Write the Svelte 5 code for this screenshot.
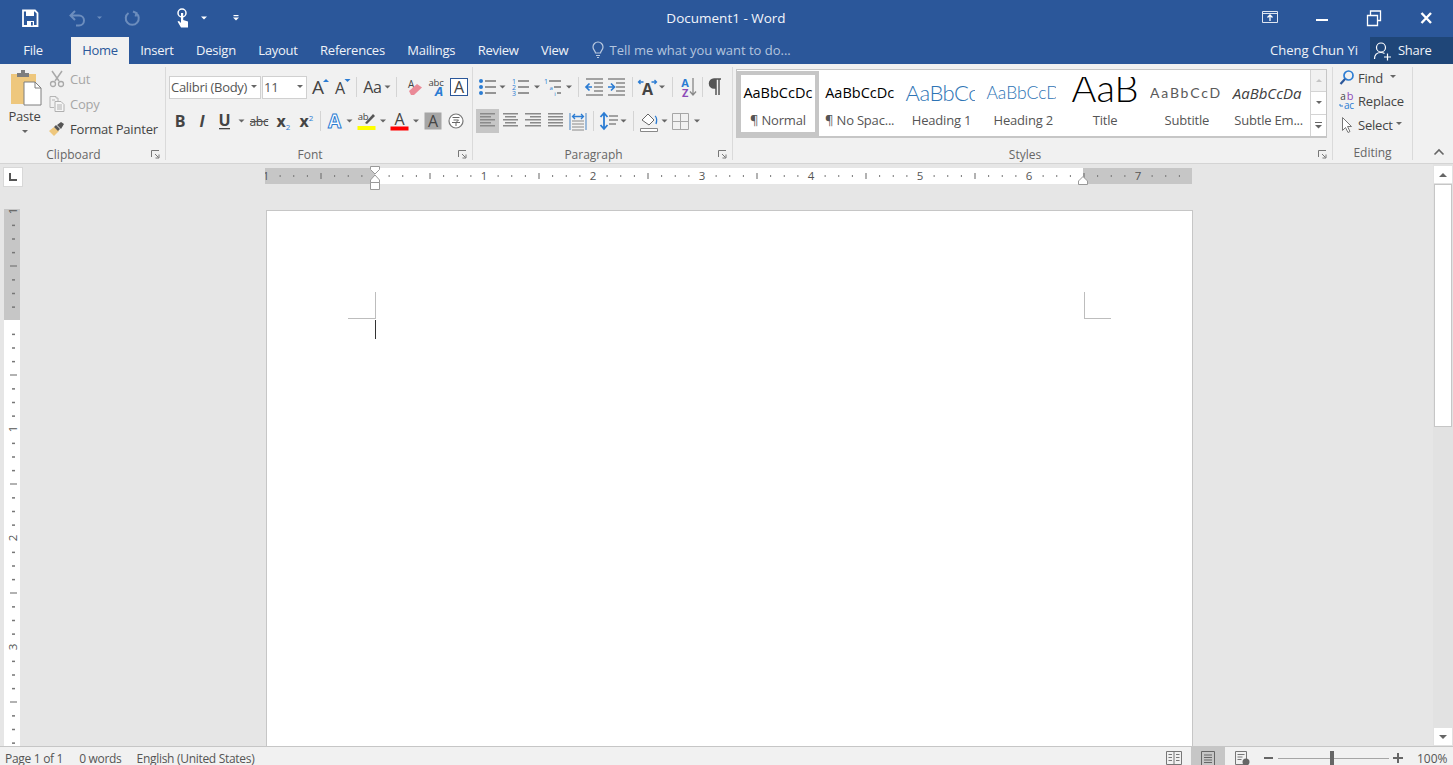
<script>
  const tabs = ["Insert", "Design", "Layout", "References", "Mailings", "Review", "View"];
  const styles = [
    { label: "¶ Normal", cls: "normal", sample: "AaBbCcDc" },
    { label: "¶ No Spac...", cls: "nospace", sample: "AaBbCcDc" },
    { label: "Heading 1", cls: "h1", sample: "AaBbCc" },
    { label: "Heading 2", cls: "h2", sample: "AaBbCcD" },
    { label: "Title", cls: "title", sample: "AaB" },
    { label: "Subtitle", cls: "subtitle", sample: "AaBbCcD" },
    { label: "Subtle Em...", cls: "subtle", sample: "AaBbCcDa" },
  ];

  // ruler scale: 109px per inch, one tick each eighth
  const step = 109 / 8;
  const hTicks = [];
  for (let k = -8; k <= 59; k++) hTicks.push({ k, x: 110 + k * step });
  const vTicks = [];
  for (let k = -8; k <= 31; k++) vTicks.push({ k, y: 111 + k * step });
</script>

{#snippet caret(w, fill = "#666")}
  <svg width={w} height="24" viewBox="0 0 {w} 24"><path d="M{w / 2 - 3} 10.5h6l-3 3z" fill={fill} /></svg>
{/snippet}

{#snippet sep(w)}
  <span class="sep" style="width:{w}px"><i></i></span>
{/snippet}

{#snippet lines(w, rows)}
  <svg width={w} height="24" viewBox="0 0 {w} 24">
    {#each rows as r, i}
      <rect x={r[0]} y={4 + i * 3} width={r[1]} height="1.5" fill="#8a8a8a" />
    {/each}
  </svg>
{/snippet}

{#snippet launcher()}
  <svg class="launch" width="9" height="9" viewBox="0 0 9 9"><path d="M.5 7V.5H8M4 4l3.5 3.5M8 4.5V8H4.5" fill="none" stroke="#777" /></svg>
{/snippet}

<div class="word">
  <header class="titlebar">
    <div class="qat">
      <svg class="save" width="24" height="24" viewBox="0 0 24 24"><path d="M5 4.500h12l2.500 2.500v13h-14.500z" fill="none" stroke="#fff" stroke-width="1.800" /><path d="M8 5h8v5h-8zM9 15h7v5h-7z" fill="#fff" /><rect x="13" y="16" width="1.800" height="3.500" fill="#2b579a" /></svg>
      <svg class="undo" width="24" height="24" viewBox="0 0 24 24"><path d="M9 5l-4.500 4.500 4.500 4.500M5 9.500h8a5 5 0 0 1 0 10h-3" fill="none" stroke="#6c8dbd" stroke-width="2" /></svg>
      <svg width="18" height="24" viewBox="0 0 18 24"><path d="M7 10.500h5l-2.500 2.500z" fill="#6c8dbd" /></svg>
      <svg class="redo" width="24" height="24" viewBox="0 0 24 24"><path d="M8.500 7a6.500 6.500 0 1 0 7.500 0M13 5.500l3.500 1.500-1 3.500" fill="none" stroke="#6c8dbd" stroke-width="2" /></svg>
      <svg class="touch" width="24" height="24" viewBox="0 0 24 24"><circle cx="11" cy="7" r="4" fill="none" stroke="#fff" stroke-width="1.500" /><path d="M10 7h2.200v7l4.800 1.500v6h-7l-3.500-6 1.500-.5 2 2z" fill="#fff" /></svg>
      <svg width="18" height="24" viewBox="0 0 18 24"><path d="M6 10.500h6l-3 3z" fill="#fff" /></svg>
      <svg class="custom" width="18" height="24" viewBox="0 0 18 24"><rect x="6.500" y="9" width="5" height="1.200" fill="#fff" /><path d="M6 11.500h6l-3 3z" fill="#fff" /></svg>
    </div>
    <div class="doc-title">Document1 - Word</div>
    <div class="winbtns">
      <svg class="disp" width="28" height="24" viewBox="0 0 28 24"><path d="M6.500 6.500h15v11h-15zM7 8.500h14" fill="none" stroke="#dfe6f1" /><path d="M14 16v-6M11.500 12.500l2.500-2.500 2.500 2.500" fill="none" stroke="#fff" stroke-width="1.300" /></svg>
      <svg width="52" height="24" viewBox="0 0 52 24"><rect x="20" y="14" width="12" height="2" fill="#fff" /></svg>
      <svg width="52" height="24" viewBox="0 0 52 24"><path d="M19.500 10.500h10v10h-10zM22.500 10v-4h10v9.500h-3" fill="none" stroke="#fff" stroke-width="1.300" /></svg>
      <svg width="53" height="24" viewBox="0 0 53 24"><path d="M21.500 8l9.500 10M31 8l-9.500 10" stroke="#fff" stroke-width="2.400" /></svg>
    </div>
  </header>

  <nav class="tabbar">
    <div class="tab file">File</div>
    <div class="tab active">Home</div>
    {#each tabs as t}
      <div class="tab">{t}</div>
    {/each}
    <div class="tellme">
      <svg width="14" height="18" viewBox="0 0 14 18"><path d="M4.500 12c0-2-2.500-3-2.500-6a5 5 0 0 1 10 0c0 3-2.500 4-2.500 6zM5 14.500h4M6 16.500h2" fill="none" stroke="#b9c9e0" stroke-width="1.200" /></svg>
      <span>Tell me what you want to do...</span>
    </div>
    <div class="user">Cheng Chun Yi</div>
    <div class="share">
      <svg width="20" height="20" viewBox="0 0 20 20"><circle cx="8" cy="6.500" r="4.500" fill="none" stroke="#fff" stroke-width="1.200" /><path d="M1.500 18c0-4 2.500-6.500 6.500-6.500 1.500 0 2.500.3 3.500 1M14.500 12.500v7M11 16h7" fill="none" stroke="#fff" stroke-width="1.200" /></svg>
      <span>Share</span>
    </div>
  </nav>

  <section class="ribbon">
    <div class="group clipboard">
      <div class="content clip-content">
        <div class="paste">
          <svg width="36" height="38" viewBox="0 0 36 38">
            <path d="M4 5h25v30h-25z" fill="#eec77d" />
            <path d="M10 4h4v-3h4v3h4v4h-12z" fill="#7e7e7e" />
            <path d="M17 13h11l6 6v17h-17z" fill="#fff" stroke="#7e7e7e" />
            <path d="M28 13v6h6" fill="none" stroke="#7e7e7e" />
          </svg>
          <span>Paste</span>
          <svg width="8" height="5" viewBox="0 0 8 5"><path d="M1 0h6l-3 3z" fill="#666" /></svg>
        </div>
        <div class="clip-list">
          <div class="clip-item dim">
            <svg width="18" height="18" viewBox="0 0 18 18"><path d="M4 1l7 10M14 1l-7 10" stroke="#a9a9a9" stroke-width="1.500" /><circle cx="5" cy="14" r="2.500" fill="none" stroke="#a9a9a9" stroke-width="1.300" /><circle cx="13" cy="14" r="2.500" fill="none" stroke="#a9a9a9" stroke-width="1.300" /></svg>
            <span>Cut</span>
          </div>
          <div class="clip-item dim">
            <svg width="18" height="18" viewBox="0 0 18 18"><path d="M2 1.500h6v1.500h2v3M2 1.500v11h4M4 5h3" fill="none" stroke="#b5b5b5" /><path d="M7 6.500h6l3 3v7h-9zM9 10h5M9 12h5M9 14h5" fill="#f6f6f6" stroke="#b0b0b0" /></svg>
            <span>Copy</span>
          </div>
          <div class="clip-item">
            <svg width="18" height="18" viewBox="0 0 18 18"><path d="M1 11l5-4 5 4-5 5z" fill="#eec77d" /><path d="M6 7l2-2 4 4-2 2zM9 5l4-3 3 2-3 5z" fill="#555" /></svg>
            <span>Format Painter</span>
          </div>
        </div>
      </div>
      <div class="glabel"><span></span><span>Clipboard</span>{@render launcher()}</div>
    </div>

    <div class="group font">
      <div class="content">
        <div class="row">
          <div class="combo name"><span>Calibri (Body)</span><svg width="8" height="5" viewBox="0 0 8 5"><path d="M1 0h6l-3 3z" fill="#666" /></svg></div>
          <div class="combo size"><span>11</span><svg width="8" height="5" viewBox="0 0 8 5"><path d="M1 0h6l-3 3z" fill="#666" /></svg></div>
          <svg width="22" height="24" viewBox="0 0 22 24"><text x="10" y="19" class="g" font-size="19">A</text><path d="M15 7l3-3 3 3z" fill="#2b7cd3" /></svg>
          <svg width="22" height="24" viewBox="0 0 22 24"><text x="10" y="19" class="g" font-size="16">A</text><path d="M14.500 4h6l-3 3z" fill="#2b7cd3" /></svg>
          {@render sep(9)}
          <svg width="23" height="24" viewBox="0 0 23 24"><text x="11.500" y="17.500" class="g" font-size="16">Aa</text></svg>
          {@render caret(7)}
          {@render sep(11)}
          <svg class="gap1" width="23" height="24" viewBox="0 0 23 24"><text x="8" y="13" class="g" font-size="10">A</text><path d="M6 16l8-7 5 3.500-8 7.500h-3z" fill="#ea8a97" /></svg>
          <svg width="21" height="24" viewBox="0 0 21 24"><text x="10" y="11" class="g" font-size="9.500">abc</text><text x="13" y="21" class="g blue" font-size="13" font-style="italic" font-weight="700">A</text></svg>
          <svg class="gap1" width="22" height="24" viewBox="0 0 22 24"><rect x="2.500" y="3.500" width="17" height="17" fill="#fff" stroke="#2b579a" /><text x="11" y="18" class="g" font-size="16">A</text></svg>
        </div>
        <div class="row second">
          <svg width="22" height="24" viewBox="0 0 22 24"><text x="11" y="18" class="g" font-size="16" font-weight="700">B</text></svg>
          <svg width="22" height="24" viewBox="0 0 22 24"><text x="11" y="18" class="g" font-size="16" font-style="italic" font-weight="700">I</text></svg>
          <svg width="23" height="24" viewBox="0 0 23 24"><text x="11.500" y="17" class="g" font-size="16" font-weight="700">U</text><rect x="6" y="19" width="11" height="1.300" fill="#444" /></svg>
          {@render caret(11)}
          <svg width="24" height="24" viewBox="0 0 24 24"><text x="12" y="16.500" class="g" font-size="12">abc</text><rect x="3" y="12" width="18" height="1" fill="#555" /></svg>
          <svg width="23" height="24" viewBox="0 0 23 24"><text x="10" y="18" class="g" font-size="16" font-weight="700">x</text><text x="17" y="21" class="g blue" font-size="8">2</text></svg>
          <svg width="22" height="24" viewBox="0 0 22 24"><text x="10" y="18" class="g" font-size="16" font-weight="700">x</text><text x="17" y="12" class="g blue" font-size="8">2</text></svg>
          {@render sep(8)}
          <svg width="21" height="24" viewBox="0 0 21 24"><text x="10.500" y="19" class="outline" font-size="19">A</text></svg>
          {@render caret(9)}
          <svg width="25" height="24" viewBox="0 0 25 24"><text x="9" y="11" class="g" font-size="9.500">ab</text><path d="M11 14l8-9 2 2-8 8z" fill="#555" /><rect x="3.500" y="17" width="18" height="4" fill="#ffff00" /></svg>
          {@render caret(8)}
          <svg width="25" height="24" viewBox="0 0 25 24"><text x="12.500" y="16" class="g" font-size="16">A</text><rect x="3.500" y="17.500" width="18" height="4" fill="#ff0000" /></svg>
          {@render caret(8)}
          <svg width="26" height="24" viewBox="0 0 26 24"><rect x="4.500" y="3.500" width="17" height="17" fill="#a6a6a6" /><text x="13" y="18" class="g" font-size="16">A</text></svg>
          <svg width="20" height="24" viewBox="0 0 20 24"><circle cx="10" cy="12" r="7" fill="#fff" stroke="#777" stroke-width="1.200" /><path d="M6.500 8.500h7M7.500 11h5l-2 2M6 13.500h8M10 13v4" fill="none" stroke="#666" /></svg>
        </div>
      </div>
      <div class="glabel"><span></span><span>Font</span>{@render launcher()}</div>
    </div>

    <div class="group para">
      <div class="content">
        <div class="row">
          <svg width="22" height="24" viewBox="0 0 22 24"><g fill="#2b7cd3"><circle cx="5" cy="6" r="2" /><circle cx="5" cy="12" r="2" /><circle cx="5" cy="18" r="2" /></g><path d="M9 6h11M9 12h11M9 18h11" stroke="#777" stroke-width="1.300" /></svg>
          {@render caret(9)}
          <svg width="26" height="24" viewBox="0 0 26 24"><text x="7" y="9" class="g blue" font-size="7">1</text><text x="7" y="15" class="g blue" font-size="7">2</text><text x="7" y="21" class="g blue" font-size="7">3</text><path d="M11 6h11M11 12h11M11 18h11" stroke="#777" stroke-width="1.300" /></svg>
          {@render caret(8)}
          <svg width="24" height="24" viewBox="0 0 24 24"><text x="5" y="9" class="g blue" font-size="7">1</text><text x="10" y="15" class="g blue" font-size="6">a</text><text x="14" y="21" class="g blue" font-size="6">i</text><path d="M8 6h12M13 12h7M16 18h4" stroke="#777" stroke-width="1.300" /></svg>
          {@render caret(8)}
          {@render sep(10)}
          <svg width="23" height="24" viewBox="0 0 23 24"><path d="M3 4h17M11 8h9M11 12h9M11 16h9M3 20h17" stroke="#888" stroke-width="1.300" /><path d="M9 12h-6M6.500 8.500l-3.500 3.500 3.500 3.500" fill="none" stroke="#2b7cd3" stroke-width="1.700" /></svg>
          <svg width="21" height="24" viewBox="0 0 21 24"><path d="M2 4h17M10 8h9M10 12h9M10 16h9M2 20h17" stroke="#888" stroke-width="1.300" /><path d="M2 12h6M5 8.500l3.500 3.500-3.500 3.500" fill="none" stroke="#2b7cd3" stroke-width="1.700" /></svg>
          {@render sep(10)}
          <svg width="21" height="24" viewBox="0 0 21 24"><text x="10.500" y="20" class="g" font-size="16" font-weight="700">A</text><path d="M1.500 7h5M3.500 5l-2 2 2 2M14.500 7h5M17.500 5l2 2-2 2" fill="none" stroke="#2b7cd3" stroke-width="1.300" /></svg>
          {@render caret(8)}
          {@render sep(12)}
          <svg width="20" height="24" viewBox="0 0 20 24"><text x="7" y="12" class="g blue" font-size="11" font-weight="700">A</text><text x="7" y="22" class="g purple" font-size="11" font-weight="700">Z</text><path d="M15 3v17M12 16.500l3 3.500 3-3.500" fill="none" stroke="#888" stroke-width="1.300" /></svg>
          {@render sep(8)}
          <svg width="20" height="24" viewBox="0 0 20 24"><path d="M10 4h-2a4.500 4.500 0 0 0 0 9h2zM10 4h5M10 4v16M13 4v16" fill="#555" stroke="#555" stroke-width="1.500" /></svg>
        </div>
        <div class="row second">
          <span class="on">{@render lines(23, [[4, 15], [4, 11], [4, 15], [4, 11], [4, 15]])}</span>
          {@render lines(23, [[4, 15], [6, 11], [4, 15], [6, 11], [4, 15]])}
          {@render lines(22, [[3, 16], [8, 11], [3, 16], [8, 11], [3, 16]])}
          {@render lines(23, [[4, 15], [4, 15], [4, 15], [4, 15], [4, 15]])}
          <svg width="22" height="24" viewBox="0 0 22 24"><path d="M3 4v17M19 4v17" stroke="#6f9dcf" stroke-width="1.300" /><path d="M5.500 7.500h11M8 5l-2.500 2.500 2.500 2.500M14 5l2.500 2.500-2.500 2.500" fill="none" stroke="#2b7cd3" stroke-width="1.300" /><path d="M5 12h12M5 15h12M5 18h12M5 21h12" stroke="#8a8a8a" stroke-width="1.200" /></svg>
          {@render sep(8)}
          <svg width="23" height="24" viewBox="0 0 23 24"><path d="M7 5v14M3.500 8l3.500-4 3.500 4M3.500 16l3.500 4 3.500-4" fill="none" stroke="#2b7cd3" stroke-width="1.800" /><path d="M12 7h9M12 11h9M12 15h7" stroke="#888" stroke-width="1.300" /></svg>
          {@render caret(7)}
          {@render sep(12)}
          <svg width="20" height="24" viewBox="0 0 20 24"><path d="M3 11l6-6 6 6-5 5z" fill="#fff" stroke="#666" /><path d="M16 7c2 1 2 5 1 8" fill="none" stroke="#2b7cd3" stroke-width="1.300" /><path d="M1.500 19.500h17v3h-17z" fill="#fff" stroke="#888" /></svg>
          {@render caret(11)}
          <svg width="21" height="24" viewBox="0 0 21 24"><path d="M2.500 4.500h16v16h-16zM10.500 4.500v16M2.500 12.500h16" fill="none" stroke="#a6a6a6" /></svg>
          {@render caret(12)}
        </div>
      </div>
      <div class="glabel"><span></span><span>Paragraph</span>{@render launcher()}</div>
    </div>

    <div class="group stylesgrp">
      <div class="gallery">
        <div class="items">
          {#each styles as s, i}
            <div class="item" class:sel={i === 0}>
              <div class="sample {s.cls}">{s.sample}</div>
              <div class="slabel">{s.label}</div>
            </div>
          {/each}
        </div>
        <div class="scroller">
          <div class="sbtn off"><svg width="8" height="5" viewBox="0 0 8 5"><path d="M1 4h6l-3-3z" fill="#c4c4c4" /></svg></div>
          <div class="sbtn"><svg width="8" height="5" viewBox="0 0 8 5"><path d="M1 1h6l-3 3z" fill="#666" /></svg></div>
          <div class="sbtn"><svg width="9" height="7" viewBox="0 0 9 7"><rect x="1" width="7" height="1" fill="#666" /><path d="M1 3h7l-3.500 3.500z" fill="#666" /></svg></div>
        </div>
      </div>
      <div class="glabel"><span></span><span>Styles</span>{@render launcher()}</div>
    </div>

    <div class="group editing">
      <div class="content edit-list">
        <div class="edit-item">
          <svg width="16" height="18" viewBox="0 0 16 18"><circle cx="9.500" cy="6.500" r="4.500" fill="none" stroke="#2b7cd3" stroke-width="1.700" /><path d="M6 10l-4.500 5" stroke="#2b579a" stroke-width="2.200" /></svg>
          <span>Find</span>
          <svg class="ecaret" width="8" height="5" viewBox="0 0 8 5"><path d="M1 0h6l-3 3z" fill="#666" /></svg>
        </div>
        <div class="edit-item">
          <svg width="16" height="18" viewBox="0 0 16 18"><text x="4" y="8" class="g" font-size="10">a</text><text x="11" y="8" class="g purple" font-size="11">b</text><text x="10" y="17" class="g blue" font-size="10">ac</text><path d="M1 12v2h3" fill="none" stroke="#2b7cd3" /></svg>
          <span>Replace</span>
        </div>
        <div class="edit-item">
          <svg width="16" height="18" viewBox="0 0 16 18"><path d="M3.500 1.500v13l3-3 2.500 5 2-1-2.500-5h4z" fill="#fff" stroke="#777" /></svg>
          <span>Select</span>
          <svg class="scaret" width="8" height="5" viewBox="0 0 8 5"><path d="M1 0h6l-3 3z" fill="#666" /></svg>
        </div>
      </div>
      <div class="glabel solo">Editing</div>
    </div>

    <div class="collapse">
      <svg width="12" height="8" viewBox="0 0 12 8"><path d="M1.500 6.500l4.500-4.500 4.500 4.500" fill="none" stroke="#666" stroke-width="1.600" /></svg>
    </div>
  </section>

  <main class="work">
    <div class="doc">
      <div class="corner">
        <div class="tabstop"><svg width="10" height="10" viewBox="0 0 10 10"><path d="M2 1v7h7" fill="none" stroke="#555" stroke-width="2" /></svg></div>
      </div>
      <svg class="hruler" width="930" height="27" viewBox="0 0 930 27">
        <rect x="0" y="3" width="927" height="16" fill="#c6c6c6" />
        <rect x="110" y="3" width="708" height="16" fill="#fff" />
        {#each hTicks as t}
          {#if t.k % 8 === 0}
            {#if t.k !== 0}<text x={t.x} y="15" class="num">{Math.abs(t.k / 8)}</text>{/if}
          {:else if t.k % 4 === 0}
            <rect x={t.x} y="8" width="1" height="6" fill="#666" />
          {:else}
            <rect x={t.x} y="10" width="1" height="2" fill="#777" />
          {/if}
        {/each}
        <path d="M105.500 1.500h9v3l-4.500 4.500-4.500-4.500z" fill="#fff" stroke="#999" />
        <path d="M110 10l4.500 5v2.500h-9v-2.500z" fill="#fff" stroke="#999" />
        <path d="M105.500 17.500h9v7h-9z" fill="#fff" stroke="#999" />
        <path d="M818 11.500l4.500 4.500v3.500h-9v-3.500z" fill="#fff" stroke="#999" />
      </svg>
      <div class="vcell">
        <svg width="16" height="537" viewBox="0 0 16 537">
          <rect width="16" height="111" fill="#c6c6c6" />
          <rect y="111" width="16" height="426" fill="#fff" />
          {#each vTicks as t}
            {#if t.k % 8 === 0}
              {#if t.k !== 0}<text transform="translate(13 {t.y}) rotate(-90)" class="num">{Math.abs(t.k / 8)}</text>{/if}
            {:else if t.k % 4 === 0}
              <rect x="6" y={t.y} width="7" height="1" fill="#666" />
            {:else}
              <rect x="8" y={t.y} width="3" height="1.500" fill="#777" />
            {/if}
          {/each}
        </svg>
      </div>
      <div class="page">
        <svg class="marks" width="926" height="140" viewBox="0 0 926 140">
          <path d="M108.500 81v27M81 107.500h27M817.500 81v27M817 107.500h27" fill="none" stroke="#bdbdbd" />
          <rect x="108" y="109" width="1" height="19" fill="#333" />
        </svg>
      </div>
    </div>
    <aside class="vscroll">
      <div class="sb-btn up"><svg width="10" height="6" viewBox="0 0 10 6"><path d="M1 5h8l-4-4z" fill="#666" /></svg></div>
      <div class="thumb"></div>
      <div class="sb-btn down"><svg width="10" height="6" viewBox="0 0 10 6"><path d="M1 1h8l-4 4z" fill="#666" /></svg></div>
    </aside>
  </main>

  <footer class="status">
    <span class="st page-count">Page 1 of 1</span>
    <span class="st words">0 words</span>
    <span class="st lang">English (United States)</span>
    <div class="views">
      <div class="view">
        <svg width="16" height="16" viewBox="0 0 16 16"><path d="M.5 1.500h15v13h-15zM8 1.500v13M2.500 4.500h3.500M2.500 7.500h3.500M2.500 10.500h3.500M10 4.500h3.500M10 7.500h3.500M10 10.500h3.500" fill="none" stroke="#777" /></svg>
      </div>
      <div class="view cur">
        <svg width="16" height="16" viewBox="0 0 16 16"><path d="M1.500 1.500h13v14h-13zM4 5h8M4 7.500h8M4 10h8M4 12.500h8" fill="none" stroke="#666" /></svg>
      </div>
      <div class="view">
        <svg width="16" height="16" viewBox="0 0 16 16"><path d="M1.500 1.500h11v13h-11zM3.500 4.500h7M3.500 7h5M3.500 9.500h4" fill="#f1f1f1" stroke="#777" /><circle cx="12" cy="12" r="3.500" fill="#666" /></svg>
      </div>
    </div>
    <div class="zoomer">
      <svg width="10" height="10" viewBox="0 0 10 10"><rect x="0" y="4" width="9" height="2" fill="#666" /></svg>
      <div class="track"><div class="knob"></div></div>
      <svg width="10" height="10" viewBox="0 0 10 10"><path d="M0 4h10v2h-10zM4 0h2v10h-2z" fill="#666" /></svg>
    </div>
    <span class="st pct">100%</span>
  </footer>
</div>

<style>
  :global(body) {
    margin: 0;
    background: #e6e6e6;
    overflow: hidden;
  }

  .word {
    width: 1453px;
    height: 765px;
    overflow: hidden;
    font-family: "Open Sans", "Noto Sans", sans-serif;
    font-size: 13px;
    color: #444;
  }

  svg {
    display: block;
    flex: none;
  }

  .g {
    font-family: "Open Sans", sans-serif;
    text-anchor: middle;
    fill: #444;
  }

  .g.blue {
    fill: #2b7cd3;
  }

  .g.purple {
    fill: #8d4bb8;
  }

  .outline {
    font-family: "Open Sans", sans-serif;
    text-anchor: middle;
    font-weight: 700;
    fill: #fff;
    stroke: #2b7cd3;
    stroke-width: 1;
  }

  .titlebar {
    height: 37px;
    background: #2b579a;
    color: #fff;
    display: grid;
    grid-template-columns: 1fr auto 1fr;
    align-items: center;
  }

  .qat {
    display: flex;
    padding: 0 0 2px 18px;
  }

  .undo {
    margin-left: 24px;
  }

  .redo {
    margin-left: 12px;
  }

  .touch {
    margin-left: 27px;
  }

  .custom {
    margin-left: 14px;
  }

  .doc-title {
    font-size: 13.500px;
    padding: 0 0 1px 0;
    margin-left: -1px;
    color: #f2f5fa;
  }

  .winbtns {
    display: flex;
    justify-content: flex-end;
    padding-bottom: 4px;
  }

  .disp {
    margin-right: 12px;
  }

  .tabbar {
    height: 27px;
    background: #2b579a;
    display: flex;
    align-items: stretch;
    color: #f0f3f8;
  }

  .tab {
    padding: 0 11.200px;
    line-height: 26px;
    height: 27px;
    font-size: 13px;
    letter-spacing: -0.25px;
  }

  .tab.file {
    width: 71px;
    padding: 0 5px 0 0;
    text-align: center;
    box-sizing: border-box;
  }

  .tab.active {
    width: 58px;
    padding: 0;
    text-align: center;
    background: #f1f1f1;
    color: #2b579a;
  }

  .tellme {
    display: flex;
    align-items: center;
    gap: 5px;
    margin: -1px 0 0 11px;
    color: #b4c5de;
  }

  .user {
    margin-left: auto;
    line-height: 26px;
    margin-right: 12px;
  }

  .share {
    width: 83px;
    box-sizing: border-box;
    background: #1f4678;
    display: flex;
    align-items: center;
    gap: 5px;
    padding-left: 3px;
    letter-spacing: -0.3px;
  }

  .share span {
    margin-top: -1px;
  }

  .ribbon {
    height: 100px;
    box-sizing: border-box;
    background: #f1f1f1;
    border-bottom: 1px solid #d4d4d4;
    padding-top: 3px;
    display: flex;
    letter-spacing: -0.2px;
  }

  .group {
    height: 93px;
    box-sizing: border-box;
    border-right: 1px solid #dadada;
    display: flex;
    flex-direction: column;
    flex: none;
  }

  .content {
    flex: 1;
    min-height: 0;
    padding-top: 8px;
  }

  .glabel {
    height: 13px;
    margin-top: auto;
    margin-bottom: 1px;
    flex: none;
    display: grid;
    grid-template-columns: 1fr auto 1fr;
    align-items: center;
    font-size: 12px;
    color: #666;
    padding-right: 18px;
    letter-spacing: 0;
  }

  .glabel.solo {
    display: block;
    text-align: center;
    line-height: 13px;
    padding: 0;
  }

  .launch {
    justify-self: end;
    margin-right: -13px;
  }

  .clipboard {
    width: 166px;
  }

  .clip-content {
    display: flex;
    padding-top: 0;
  }

  .paste {
    width: 46px;
    padding-left: 3px;
    box-sizing: border-box;
    display: flex;
    flex-direction: column;
    align-items: center;
    padding-top: 2px;
  }

  .paste span {
    margin-top: -1px;
    line-height: 20px;
  }

  .paste svg:last-child {
    margin-top: 4px;
  }

  .clip-list {
    display: flex;
    flex-direction: column;
    margin-top: -1px;
  }

  .clip-item {
    display: flex;
    align-items: center;
    gap: 4px;
    height: 25px;
    padding-left: 2px;
  }

  .clip-item.dim {
    color: #a6a6a6;
  }

  .font {
    width: 307px;
  }

  .font .content,
  .para .content {
    padding-left: 3px;
  }

  .para {
    width: 260px;
  }

  .row {
    display: flex;
    align-items: center;
    height: 24px;
  }

  .row.second {
    margin-top: 10px;
  }

  .gap1 {
    margin-left: 1px;
  }

  .sep {
    display: flex;
    justify-content: center;
    flex: none;
  }

  .sep i {
    display: block;
    width: 1px;
    height: 20px;
    background: #d4d4d4;
  }

  .combo {
    height: 23px;
    box-sizing: border-box;
    background: #fff;
    border: 1px solid #d0d0d0;
    display: flex;
    align-items: center;
    justify-content: space-between;
    padding: 0 2px 0 1px;
    font-size: 13px;
    color: #555;
  }

  .combo.name {
    width: 92px;
    margin-right: 1px;
    white-space: nowrap;
  }

  .combo.name span {
    overflow: hidden;
    width: 79px;
    letter-spacing: -0.3px;
  }

  .combo.size {
    width: 45px;
    margin-right: 1px;
  }

  .on {
    background: #c6c6c6;
    display: block;
  }

  .stylesgrp {
    width: 600px;
    padding-left: 3px;
  }

  .gallery {
    width: 591px;
    height: 69px;
    margin-top: 2px;
    flex: none;
    box-sizing: border-box;
    background: #fff;
    border: 1px solid #c6c6c6;
    border-width: 1px 1px 2px 1px;
    display: flex;
  }

  .items {
    flex: 1;
    display: flex;
    padding: 1px 0 0 0;
  }

  .item {
    width: 81.800px;
    height: 65px;
    box-sizing: border-box;
    display: flex;
    flex-direction: column;
    align-items: center;
    flex: none;
    border: 4px solid transparent;
  }

  .item.sel {
    border-color: #c6c6c6;
  }

  .sample {
    height: 34px;
    width: 73.800px;
    flex: none;
    overflow: hidden;
    white-space: nowrap;
    text-align: center;
    line-height: 36px;
    font-size: 14.500px;
    letter-spacing: 0;
    color: #000;
  }

  .sample.h1,
  .sample.h2,
  .sample.subtitle,
  .sample.subtle {
    align-self: flex-start;
    width: 70px;
    text-align: left;
    font-family: "Lato", sans-serif;
  }

  .sample.h1 {
    font-size: 22px;
    color: #2e74b5;
    font-weight: 300;
    letter-spacing: -0.5px;
    padding-left: 1px;
    width: 69px;
  }

  .sample.h2 {
    font-size: 17.500px;
    color: #2e74b5;
    font-weight: 300;
  }

  .sample.title {
    font-size: 38px;
    font-family: "Lato", sans-serif;
    font-weight: 300;
    line-height: 20px;
    height: 32px;
    margin-top: 2px;
  }

  .sample.subtitle {
    font-size: 14px;
    letter-spacing: 1.800px;
    color: #5a5a5a;
    width: 71px;
  }

  .sample.subtle {
    font-family: "Open Sans", sans-serif;
    font-size: 15px;
    font-style: italic;
    color: #404040;
    padding-left: 1px;
    width: 70px;
  }

  .slabel {
    font-size: 13px;
    color: #555;
    line-height: 22px;
    white-space: nowrap;
  }

  .scroller {
    width: 15px;
    flex: none;
    border-left: 1px solid #d4d4d4;
    display: flex;
    flex-direction: column;
  }

  .sbtn {
    flex: 1;
    display: flex;
    align-items: center;
    justify-content: center;
  }

  .sbtn + .sbtn {
    border-top: 1px solid #d4d4d4;
  }

  .sbtn.off {
    background: #f1f1f1;
  }

  .editing {
    width: 80px;
  }

  .edit-list {
    padding: 0 0 0 6px;
    display: flex;
    flex-direction: column;
  }

  .edit-item {
    display: flex;
    align-items: center;
    gap: 3px;
    height: 23.500px;
  }

  .edit-item:first-child {
    margin-top: -1px;
  }

  .ecaret {
    margin-left: 3px;
  }

  .scaret {
    margin-left: -1px;
  }

  .collapse {
    flex: 1;
    display: flex;
    justify-content: center;
    align-items: flex-end;
    padding: 0 0 2px 11px;
    height: 89px;
  }

  .work {
    height: 582px;
    display: flex;
    background: #e6e6e6;
  }

  .doc {
    width: 1433px;
    overflow: hidden;
    display: grid;
    grid-template-columns: 265px 1fr;
    grid-template-rows: 45px 1fr;
  }

  .corner {
    padding: 3px 0 0 3px;
  }

  .tabstop {
    width: 20px;
    height: 20px;
    background: #fff;
    border: 1px solid #d8d8d8;
    box-sizing: border-box;
    display: flex;
    align-items: center;
    justify-content: center;
  }

  .hruler {
    margin-top: 1px;
  }

  .num {
    font-family: "Open Sans", sans-serif;
    font-size: 11.500px;
    fill: #555;
    text-anchor: middle;
  }

  .vcell {
    padding-left: 4px;
    height: 537px;
    overflow: hidden;
  }

  .page {
    position: relative;
    margin: 1px 0 0 1px;
    width: 927px;
    height: 536px;
    box-sizing: border-box;
    background: #fff;
    border: 1px solid #c6c6c6;
    border-bottom: none;
  }

  .marks {
    position: absolute;
    left: 0;
    top: 0;
  }

  .vscroll {
    width: 20px;
    display: flex;
    flex-direction: column;
    align-items: center;
    background: #e2e2e2;
    padding-top: 2px;
    box-sizing: border-box;
  }

  .sb-btn {
    width: 18px;
    height: 17px;
    flex: none;
    background: #fff;
    display: flex;
    align-items: center;
    justify-content: center;
  }

  .thumb {
    width: 18px;
    height: 243px;
    flex: none;
    margin-top: 1px;
    background: #fff;
    border: 1px solid #c6c6c6;
    box-sizing: border-box;
  }

  .sb-btn.down {
    margin-top: auto;
    margin-bottom: 1px;
  }

  .status {
    height: 19px;
    box-sizing: border-box;
    background: #f1f1f1;
    border-top: 1px solid #c6c6c6;
    display: flex;
    align-items: flex-start;
    font-size: 12px;
    color: #555;
    padding-left: 5px;
    letter-spacing: -0.3px;
  }

  .st {
    line-height: 16px;
    margin-top: 4px;
  }

  .words {
    margin-left: 16px;
  }

  .lang {
    margin-left: 15px;
  }

  .views {
    margin-left: auto;
    display: flex;
  }

  .view {
    width: 34px;
    height: 18px;
    display: flex;
    align-items: flex-start;
    justify-content: center;
    padding-top: 3px;
    box-sizing: border-box;
  }

  .view.cur {
    background: #c6c6c6;
  }

  .zoomer {
    display: flex;
    align-items: center;
    margin-left: 5px;
    margin-top: 6px;
    gap: 4px;
    width: 139px;
  }

  .track {
    flex: 1;
    height: 1px;
    background: #a6a6a6;
    display: flex;
    justify-content: center;
    align-items: center;
  }

  .knob {
    width: 4px;
    height: 14px;
    background: #666;
    flex: none;
    margin-right: 4px;
  }

  .pct {
    margin-left: 14px;
    width: 36px;
    letter-spacing: 0;
  }
</style>
